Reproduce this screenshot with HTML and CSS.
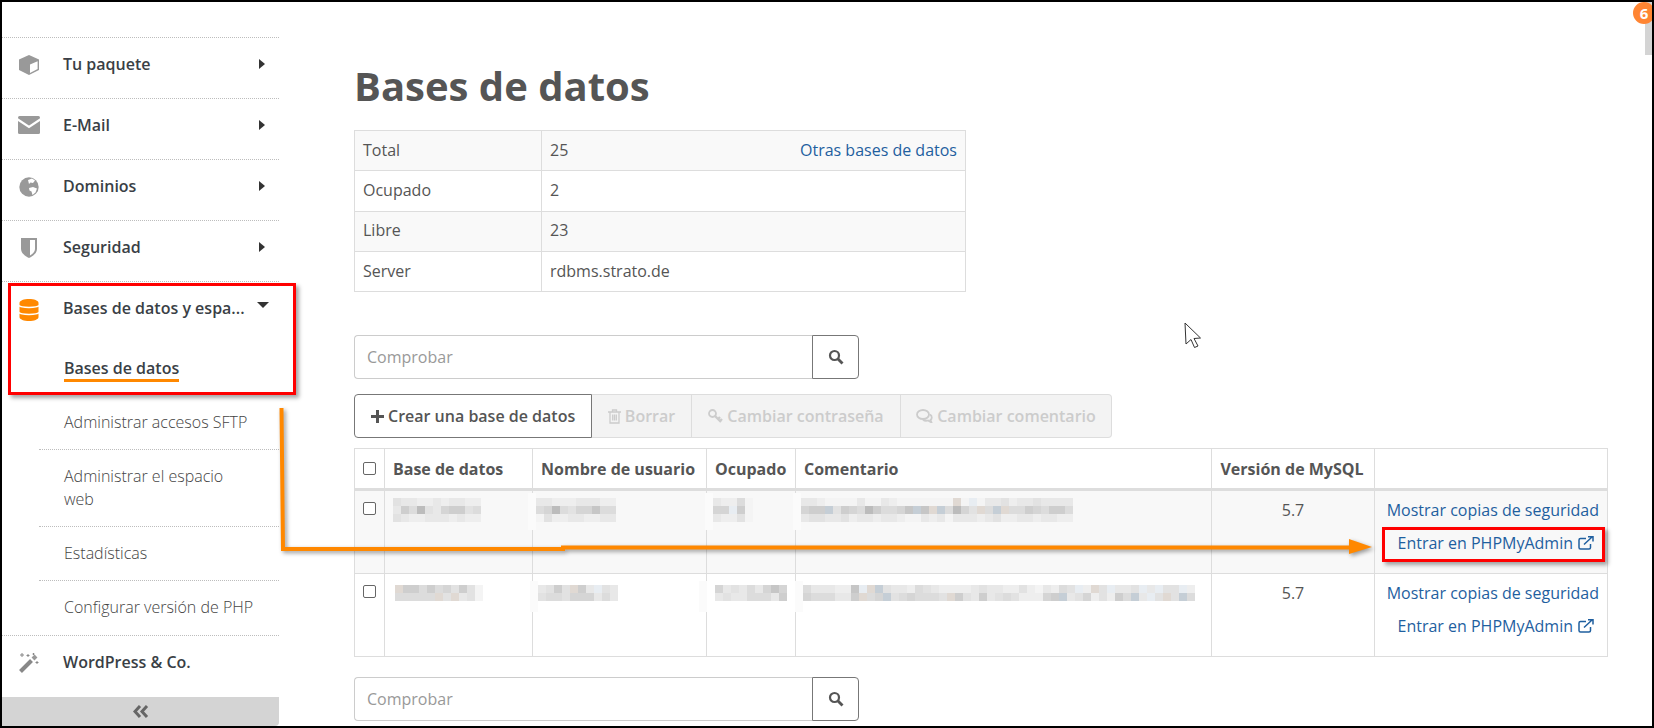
FILE: index.html
```html
<!DOCTYPE html>
<html lang="es">
<head>
<meta charset="utf-8">
<title>Bases de datos</title>
<link rel="stylesheet" href="styles.css">
</head>
<body>
<div class="frame">
  <aside class="sidebar">
    <nav class="nav">
      <div class="nav-item">
        <span class="nav-icon"><svg width="22" height="20" viewBox="0 0 22 20"><path class="g" d="M11 0 21 4.500V15L11 20 1 15V4.500Z"/><path class="wf" d="M12 9.600 19.600 6.200V14L12 18Z"/></svg></span>
        <span class="nav-label">Tu paquete</span><span class="caret-right"></span>
      </div>
      <div class="nav-item">
        <span class="nav-icon"><svg width="22" height="18" viewBox="0 0 22 18"><rect class="g" width="22" height="18" rx="1.500"/><path class="ws" d="M-1 3 11 11 23 3"/></svg></span>
        <span class="nav-label">E-Mail</span><span class="caret-right"></span>
      </div>
      <div class="nav-item">
        <span class="nav-icon"><svg width="22" height="20" viewBox="0 0 22 20"><circle class="g" cx="11" cy="10" r="9.700"/><path class="wf" d="M10 3 14 1.600 17 3.500 15 6 12.500 5.500 11 7ZM11 11 15 10 19 11.500 17.500 15.500 14.500 18 13.500 14.500 11.500 13.500Z"/></svg></span>
        <span class="nav-label">Dominios</span><span class="caret-right"></span>
      </div>
      <div class="nav-item">
        <span class="nav-icon"><svg width="22" height="20" viewBox="0 0 22 20"><path class="g" d="M3 0H19V11C19 15 15 18 11 20 7 18 3 15 3 11Z"/><path class="wf" d="M12 2H17V11C17 14 14.500 16 12 17.500Z"/></svg></span>
        <span class="nav-label">Seguridad</span><span class="caret-right"></span>
      </div>
      <div class="nav-item nav-open">
        <span class="nav-icon"><svg width="22" height="22" viewBox="0 0 22 22"><path class="o" d="M1.500 4C1.500 1.500 6 0 11 0S20.500 1.500 20.500 4V18C20.500 20.500 16 22 11 22S1.500 20.500 1.500 18Z"/><path class="wt" d="M1 6.500C3 9 19 9 21 6.500M1 13.500C3 16 19 16 21 13.500"/></svg></span>
        <span class="nav-label">Bases de datos y espa...</span><span class="caret-down"></span>
      </div>
      <ul class="subnav">
        <li class="sub-item sub-current"><span class="sub-active">Bases de datos</span></li>
        <li class="sub-item sub-line">Administrar accesos SFTP</li>
        <li class="sub-item sub-line">Administrar el espacio<br>web</li>
        <li class="sub-item sub-line">Estadísticas</li>
        <li class="sub-item">Configurar versión de PHP</li>
      </ul>
      <div class="nav-item nav-wp">
        <span class="nav-icon"><svg width="22" height="20" viewBox="0 0 22 20"><path class="gs" d="M2.500 18.500 13.500 7.500"/><path class="gsl" d="M15 6 18 3"/><path class="o2" d="M4 0V4M2 2H6M10 1V4M8.500 2.500H11.500M19 8V11M17.500 9.500H20.500M15.500 0V2M14.500 1H16.500"/></svg></span>
        <span class="nav-label nav-strong">WordPress &amp; Co.</span>
      </div>
    </nav>
    <div class="collapse"><svg width="16" height="13" viewBox="0 0 16 13"><path class="chev" d="M7 1 2 6.500 7 12M14 1 9 6.500 14 12"/></svg></div>
  </aside>

  <main class="main">
    <h1 class="title">Bases de datos</h1>
    <table class="info">
      <tr class="odd"><td class="info-k">Total</td><td><a class="link info-more">Otras bases de datos</a>25</td></tr>
      <tr><td class="info-k">Ocupado</td><td>2</td></tr>
      <tr class="odd"><td class="info-k">Libre</td><td>23</td></tr>
      <tr><td class="info-k">Server</td><td>rdbms.strato.de</td></tr>
    </table>

    <div class="search search-top">
      <input class="search-input" placeholder="Comprobar">
      <button class="search-btn"><svg width="16" height="16" viewBox="0 0 16 16"><circle class="mag" cx="6.500" cy="6.500" r="4.500"/><path class="mag-h" d="M10 10 14.500 14.500"/></svg></button>
    </div>

    <div class="toolbar">
      <button class="tb tb-primary"><svg width="13" height="13" viewBox="0 0 13 13"><path class="plus" d="M5 0H8V5H13V8H8V13H5V8H0V5H5Z"/></svg>Crear una base de datos</button>
      <button class="tb tb-off tb-del"><svg width="13" height="15" viewBox="0 0 13 15"><path class="trash" d="M0 3H13M4.500 3V1H8.500V3M2 3V14H11V3M4.700 5.500V11.500M6.500 5.500V11.500M8.300 5.500V11.500"/></svg>Borrar</button>
      <button class="tb tb-off tb-key"><svg width="15" height="14" viewBox="0 0 15 14"><circle class="trash-b" cx="4.500" cy="4.500" r="3.500"/><path class="keyb" d="M7 7 13 13M10 10 12 8M12 12 14 10"/></svg>Cambiar contraseña</button>
      <button class="tb tb-off tb-last"><svg width="17" height="14" viewBox="0 0 17 14"><ellipse class="trash-b" cx="7" cy="5.500" rx="6" ry="4.500"/><path class="trash-b" d="M14 5.500C16.500 7 16 10 14.500 11L15.500 13.500 12 11.500C10 12 8 11.500 7 10.500"/></svg>Cambiar comentario</button>
    </div>

    <table class="grid">
      <colgroup><col class="c-check"><col class="c-db"><col class="c-user"><col class="c-occ"><col class="c-com"><col class="c-ver"><col class="c-act"></colgroup>
      <thead>
        <tr>
          <th class="cell-check"><input class="check" type="checkbox"></th>
          <th>Base de datos</th><th>Nombre de usuario</th><th>Ocupado</th><th>Comentario</th><th class="th-ver">Versión de MySQL</th><th></th>
        </tr>
      </thead>
      <tbody>
        <tr class="row-a">
          <td class="cell-check"><input class="check" type="checkbox"></td>
          <td><svg class="mosaic m-a-db" data-rows="32211212211,26483256634,32112221211"></svg></td>
          <td><svg class="mosaic m-a-user" data-patch="-8,-5,37" data-rows="2211122211,4584355744,0311221122"></svg></td>
          <td><svg class="mosaic m-a-occ" data-patch="-8,-5,37" data-rows="21140,55c60,21130"></svg></td>
          <td><svg class="mosaic m-a-com" data-patch="-8,-5,37" data-rows="2210000200210000000w0c022312232222,566b3654864457b7wb4853w4bw44654664,2332231221221002120222123112212211"></svg></td>
          <td class="cell-ver">5.7</td>
          <td class="cell-act"><a class="link">Mostrar copias de seguridad</a><a class="link link-pma">Entrar en PHPMyAdmin<svg class="ext" width="16" height="14" viewBox="0 0 16 14"><path class="ext-s" d="M12.500 8V11.500C12.500 12.500 11.800 13 11 13H2.500C1.500 13 1 12.500 1 11.500V4C1 3 1.500 2.500 2.500 2.500H8"/><path class="ext-s" d="M6 8.500 14 1M10 .8H15V5.500"/></svg></a></td>
        </tr>
        <tr>
          <td class="cell-check"><input class="check" type="checkbox"></td>
          <td><svg class="mosaic m-b-db" data-rows="w6646453630,44444w3w230"></svg></td>
          <td><svg class="mosaic m-b-user" data-patch="-8,-4,31" data-rows="2363w62c32,3443555242"></svg></td>
          <td><svg class="mosaic m-b-occ" data-patch="-16,-4,31" data-rows="523242575,232244426"></svg></td>
          <td><svg class="mosaic m-b-com" data-patch="-8,-4,31" data-rows="4222117cwb322143211112322113102143c1w3c223c2c33c1,5444226w45b3454443w6326234311156b23513164b2c3w3b4"></svg></td>
          <td class="cell-ver">5.7</td>
          <td class="cell-act"><a class="link">Mostrar copias de seguridad</a><a class="link link-pma">Entrar en PHPMyAdmin<svg class="ext" width="16" height="14" viewBox="0 0 16 14"><path class="ext-s" d="M12.500 8V11.500C12.500 12.500 11.800 13 11 13H2.500C1.500 13 1 12.500 1 11.500V4C1 3 1.500 2.500 2.500 2.500H8"/><path class="ext-s" d="M6 8.500 14 1M10 .8H15V5.500"/></svg></a></td>
        </tr>
      </tbody>
    </table>

    <div class="search search-bottom">
      <input class="search-input" placeholder="Comprobar">
      <button class="search-btn"><svg width="16" height="16" viewBox="0 0 16 16"><circle class="mag" cx="6.500" cy="6.500" r="4.500"/><path class="mag-h" d="M10 10 14.500 14.500"/></svg></button>
    </div>
  </main>

  <div class="scroll-thumb"></div>
  <div class="badge">6</div>
  <div class="callout callout-nav"></div>
  <div class="callout callout-pma"></div>
  <svg class="annot" width="1650" height="724" viewBox="2 2 1650 724">
    <path class="arrow-line" d="M281.500 408 283 549H563V547.500H1352"/>
    <path class="arrow-head" d="M1349 539 1372 547 1349 554Z"/>
  </svg>
  <svg class="cursor" width="24" height="32" viewBox="1180 318 24 32"><path class="cursor-p" d="M1185 323 1186 344 1191 339.500 1194.500 347.500 1198 346 1194 338.500 1200.500 338Z"/></svg>
</div>
<script src="mosaic.js"></script>
</body>
</html>
```
FILE: styles.css
```css
* { box-sizing: border-box; }
html, body { margin: 0; padding: 0; }
body { font-family: "Open Sans", "Noto Sans", sans-serif; font-size: 16px; color: #555; background: #fff; }
.frame { position: relative; display: flex; width: 1654px; height: 728px; border: 2px solid #000; background: #fff; overflow: hidden; }

/* sidebar */
.sidebar { display: flex; flex-direction: column; flex: none; width: 277px; height: 724px; padding-top: 35px; }
.nav { flex: 1; }
.nav-item { display: flex; align-items: flex-start; height: 61px; padding: 14px 0 0 16px; border-top: 1px dotted #bdbdbd; line-height: 24px; }
.nav-open { height: 60px; }
.nav-wp { height: 61px; }
.nav-icon { flex: none; display: flex; width: 24px; height: 24px; margin-right: 21px; padding-top: 3px; }
.nav-label { flex: 1; min-width: 0; font-size: 16px; font-weight: 600; color: #3a3f46; white-space: nowrap; }
.nav-open .nav-label { margin-right: 12px; }
.caret-right { flex: none; margin: 7px 14px 0 0; border-style: solid; border-width: 5.500px 0 5.500px 6px; border-color: transparent transparent transparent #333; }
.caret-down { flex: none; margin: 6px 10px 0 0; border-style: solid; border-width: 6px 6px 0 6px; border-color: #333 transparent transparent transparent; }
.subnav { margin: 0; padding: 0 0 0 37px; list-style: none; }
.sub-item { padding: 15px 0 15px 25px; line-height: 23px; font-size: 16px; font-weight: 300; color: #444; }
.sub-line { border-bottom: 1px dotted #bdbdbd; }
.sub-item:last-child { height: 54px; }
.sub-current { height: 55px; padding-top: 16px; }
.sub-active { display: inline-block; height: 25px; font-weight: 600; color: #3a3f46; font-size: 16px; border-bottom: 3px solid #f80; line-height: 23px; }
.collapse { flex: none; display: flex; justify-content: center; align-items: center; height: 29px; background: #d4d4d4; border-bottom-right-radius: 4px; }
.g { fill: #999; }
.wf { fill: #fff; }
.ws { fill: none; stroke: #fff; stroke-width: 2.200; }
.o { fill: #f80; }
.wt { fill: none; stroke: #fff; stroke-width: 1.500; }
.gs { fill: none; stroke: #888; stroke-width: 4; }
.gsl { fill: none; stroke: #999; stroke-width: 4; }
.o2 { fill: none; stroke: #888; stroke-width: 1; }
.chev { fill: none; stroke: #666; stroke-width: 3; }

/* main */
.main { flex: none; width: 1253px; margin-left: 75px; }
.title { margin: 0; padding-top: 58px; font-size: 40px; line-height: 52px; font-weight: 700; color: #555; }
.link { color: #1f5f9f; }
.info { width: 612px; margin-top: 18px; border-collapse: collapse; table-layout: fixed; }
.info td { height: 40.300px; padding: 0 8px 2px; border: 1px solid #ddd; line-height: 24px; }
.info .info-k { width: 187px; }
.odd td { background: #f9f9f9; }
.info-more { float: right; }
.search { display: flex; width: 505px; height: 44px; }
.search-top { margin-top: 43px; }
.search-bottom { margin-top: 20px; }
.search-input { flex: none; width: 458px; height: 44px; padding: 0 12px; border: 1px solid #ccc; border-right: 0; border-radius: 4px 0 0 4px; font: 400 16px "Open Sans", sans-serif; color: #555; background: #fff; }
.search-input::placeholder { color: #999; opacity: 1; }
.search-btn { flex: none; display: flex; align-items: center; justify-content: center; width: 47px; height: 44px; padding: 0; border: 1px solid #777; border-radius: 0 4px 4px 0; background: #fff; }
.mag { fill: none; stroke: #555; stroke-width: 2.200; }
.mag-h { fill: none; stroke: #555; stroke-width: 2.800; }
.toolbar { display: flex; height: 44px; margin-top: 15px; }
.tb { display: flex; align-items: center; gap: 4px; height: 44px; padding: 0; border: 1px solid #ddd; border-left: 0; font: 600 16px "Open Sans", sans-serif; white-space: nowrap; }
.tb-primary { width: 238px; padding-left: 16px; border: 1px solid #777; border-radius: 4px 0 0 4px; background: #fff; color: #555; }
.tb-off { background: #f3f3f3; color: #ccc; justify-content: center; }
.tb-del { width: 100px; }
.tb-key { width: 209px; }
.tb-last { width: 211px; border-radius: 0 4px 4px 0; }
.plus { fill: #555; }
.trash { fill: none; stroke: #ccc; stroke-width: 1.300; }
.trash-b { fill: none; stroke: #ccc; stroke-width: 1.800; }
.keyb { fill: none; stroke: #ccc; stroke-width: 2.400; }
.grid { width: 1253px; margin-top: 10px; border-collapse: collapse; table-layout: fixed; }
.c-check { width: 30px; }
.c-db { width: 148px; }
.c-user { width: 174px; }
.c-occ { width: 89px; }
.c-com { width: 416px; }
.c-ver { width: 163px; }
.c-act { width: 233px; }
.grid th { height: 41px; padding: 0 4px 0 8px; border: 1px solid #ddd; border-bottom: 3px solid #ddd; text-align: left; font-weight: 700; font-size: 16px; color: #555; white-space: nowrap; }
.grid td { height: 83px; padding: 7px 9px 0; border: 1px solid #ddd; vertical-align: top; line-height: 24px; }
.grid .row-a td { height: 84px; }
.grid .th-ver { padding: 0 6px 0 4px; text-align: center; }
.row-a td { background: #f8f8f8; }
.grid th.cell-check { padding: 0; }
.grid td.cell-check { padding: 11px 0 0; }
.check { appearance: none; display: block; width: 13px; height: 13px; margin: 0 auto; border: 1px solid #666; border-radius: 2px; background: #fff; }
.mosaic { display: block; overflow: visible; }
.m-a-db { margin-left: -1px; }
.m-a-user { margin-left: -6px; }
.m-a-occ { margin-left: -3px; }
.m-a-com { margin-left: -4px; }
.m-b-db, .m-b-user, .m-b-occ, .m-b-com { margin-top: 4px; }
.m-b-db { margin-left: 1px; }
.m-b-user { margin-left: -4px; }
.m-b-occ { margin-left: -1px; }
.m-b-com { margin-left: -2px; }
.grid .cell-ver { text-align: center; }
.cell-act { text-align: right; white-space: nowrap; }
.grid .cell-act { padding-right: 8px; }
.cell-act .link { display: block; }
.link-pma { margin-top: 9px; padding-right: 5px; }
.ext { margin-left: 5px; vertical-align: -1px; }
.ext-s { fill: none; stroke: #1f5f9f; stroke-width: 1.500; }

/* overlays */
.scroll-thumb { position: absolute; left: 1643px; top: 0; width: 7px; height: 53px; background: #d4d4d4; }
.badge { position: absolute; left: 1631px; top: 0; width: 22px; height: 22px; border-radius: 50%; background: #ff8533; color: #fff; font-size: 15px; font-weight: 700; line-height: 22px; text-align: center; }
.callout { position: absolute; border: 3px solid #f00; box-shadow: 3px 3px 4px rgba(0, 0, 0, .35); }
.callout-nav { left: 6px; top: 281px; width: 288px; height: 112px; }
.callout-pma { left: 1380px; top: 525px; width: 223px; height: 35px; }
.annot { position: absolute; left: 0; top: 0; filter: drop-shadow(2px 2px 2px rgba(0, 0, 0, .4)); pointer-events: none; }
.arrow-line { fill: none; stroke: #ff8800; stroke-width: 4; }
.arrow-head { fill: #ff8800; }
.cursor { position: absolute; left: 1178px; top: 316px; }
.cursor-p { fill: #fff; stroke: #333; stroke-width: 1; }
```
FILE: mosaic.js
```js
var SHADES = { "0": "#f4f4f4", "1": "#eeeeee", "2": "#e8e8e8", "3": "#e2e2e2", "4": "#dcdcdc", "5": "#d5d5d5", "6": "#cecece", "7": "#c6c6c6", "8": "#bcbcbc", "9": "#b3b3b3", w: "#e0d9d3", b: "#c5ced6", c: "#e8edf2" };
var NS = "http://www.w3.org/2000/svg";
var BLOCK = 8;

function addRect(svg, x, y, w, h, fill) {
  var r = document.createElementNS(NS, "rect");
  r.setAttribute("x", x);
  r.setAttribute("y", y);
  r.setAttribute("width", w);
  r.setAttribute("height", h);
  r.setAttribute("fill", fill);
  svg.appendChild(r);
}

document.querySelectorAll(".mosaic").forEach(function (svg) {
  var rows = svg.getAttribute("data-rows").split(",");
  var cols = rows[0].length;
  svg.setAttribute("width", cols * BLOCK);
  svg.setAttribute("height", rows.length * BLOCK);
  svg.setAttribute("shape-rendering", "crispEdges");
  var patch = svg.getAttribute("data-patch");
  if (patch) {
    var p = patch.split(",").map(Number);
    addRect(svg, p[0], p[1], BLOCK, p[2], "#fbfbfb");
  }
  rows.forEach(function (row, y) {
    row.split("").forEach(function (ch, x) {
      addRect(svg, x * BLOCK, y * BLOCK, BLOCK, BLOCK, SHADES[ch] || "transparent");
    });
  });
});
```
